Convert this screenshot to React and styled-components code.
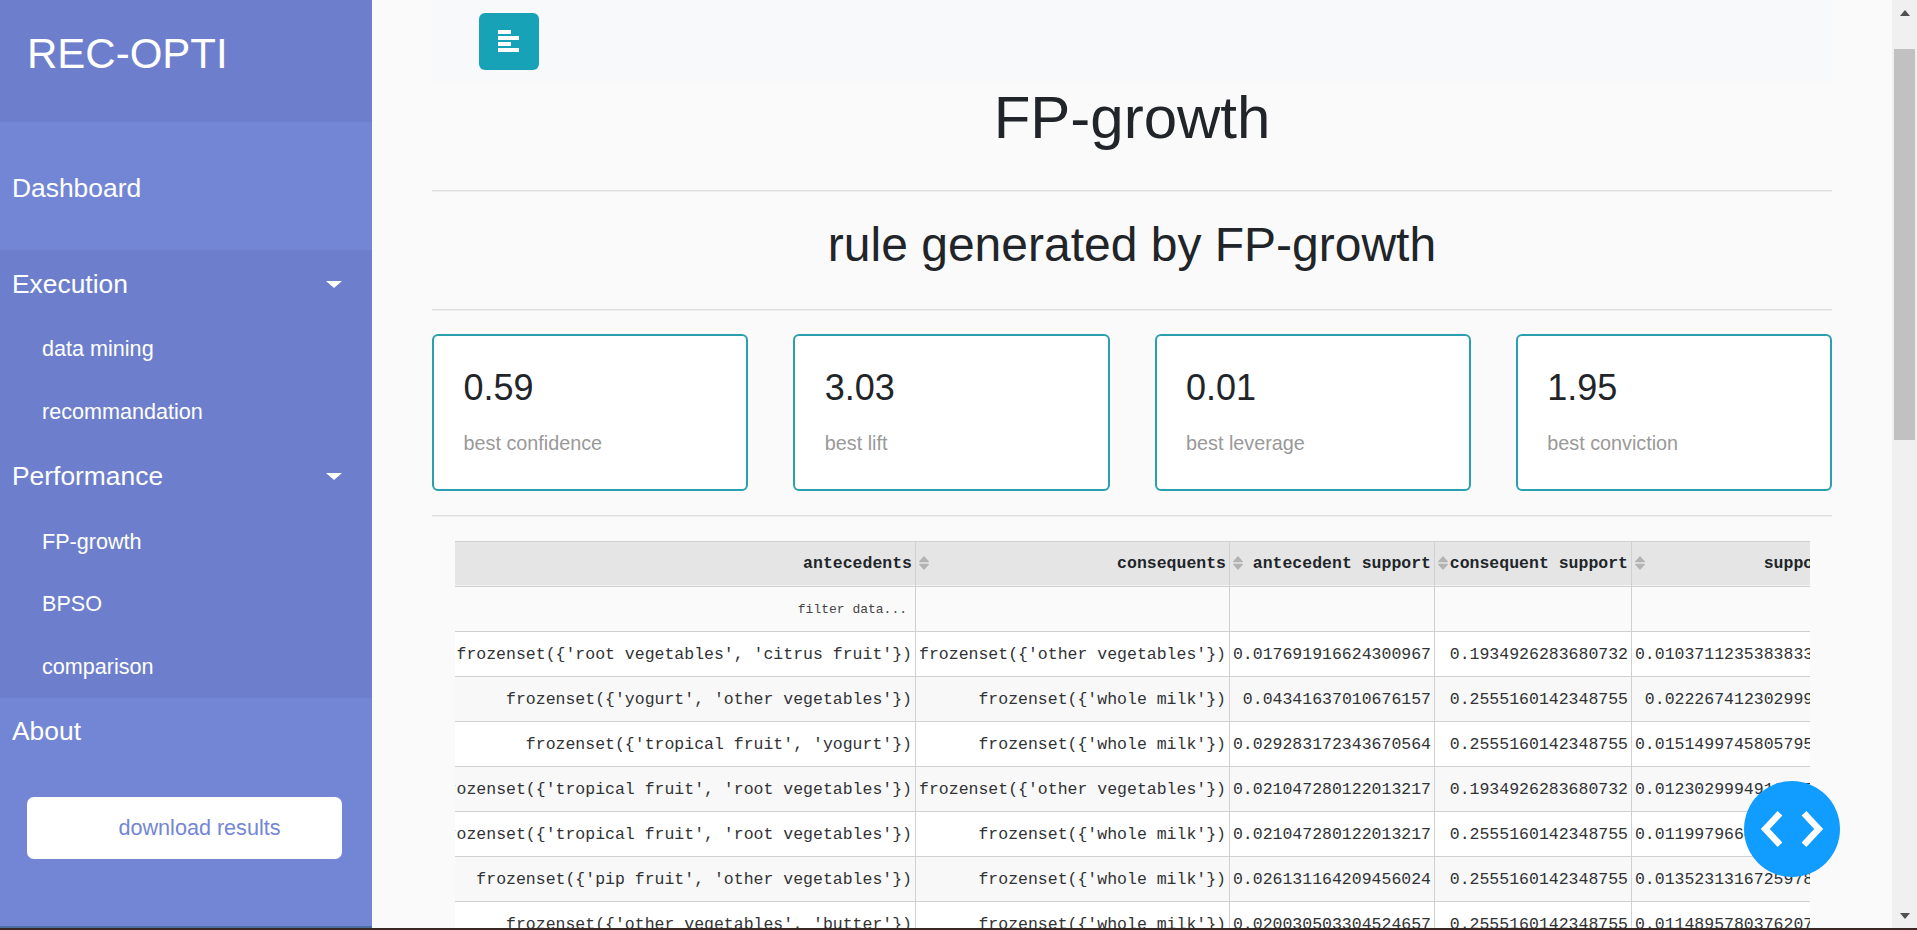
import React from "react";
import styled, { createGlobalStyle } from "styled-components";

const Global = createGlobalStyle`
  * { box-sizing: border-box; }
  html, body, #root { height: 100%; }
  body {
    margin: 0;
    overflow: hidden;
    background: #fafafa;
    color: #212529;
    font-family: "Liberation Sans", Arial, sans-serif;
  }
`;

const Screen = styled.div`
  display: flex;
  flex-direction: column;
  width: 1917px;
  height: 930px;
  overflow: hidden;
`;
const Page = styled.div`
  display: flex;
  height: 928px;
  overflow: hidden;
`;
const BottomEdge = styled.div`
  height: 2px;
  background: #3b2823;
`;

const Sidebar = styled.nav`
  display: flex;
  flex-direction: column;
  flex: 0 0 372px;
  background: #7386d5;
  color: #fff;
  border-bottom: 2px solid #4a6fa0;
`;
const Brand = styled.div`
  height: 122px;
  padding: 30px 27px 0 27px;
  background: #6d7fcc;
  font-size: 42px;
  line-height: 48px;
`;
const NavGroup = styled.div`
  background: #6d7fcc;
`;
const NavItem = styled.a`
  display: flex;
  align-items: center;
  justify-content: space-between;
  height: ${(p) => (p.$spacious ? 128 : 68)}px;
  padding: ${(p) => (p.$spacious ? 5 : 0)}px 30px 0 12px;
  font-size: 26.4px;
`;
const SubItem = styled.a`
  display: flex;
  align-items: center;
  height: 62.4px;
  padding-left: 42px;
  font-size: 21.6px;
`;
const Caret = styled.span`
  border: 8px solid transparent;
  border-top: 7.5px solid #fff;
  border-bottom: 0;
`;
const Download = styled.button`
  height: 62px;
  margin: 31px 30px 0 27px;
  padding: 0 0 0 30px;
  border: 0;
  border-radius: 7px;
  background: #fff;
  color: #7386d5;
  font: 21.6px "Liberation Sans", Arial, sans-serif;
`;

const Main = styled.main`
  flex: 1;
  padding: 0 60px;
  overflow: hidden;
`;
const Navbar = styled.div`
  display: flex;
  height: 82px;
  padding: 13px 47px;
  background: #f8f9fb;
`;
const Toggle = styled.button`
  display: flex;
  align-items: center;
  justify-content: center;
  width: 60px;
  height: 57px;
  padding: 0 1px 1px 0;
  border: 0;
  border-radius: 6px;
  background: #17a2b8;
`;
const Title = styled.h1`
  margin: 0;
  height: 108px;
  padding-top: 1px;
  font-size: 60px;
  font-weight: 400;
  line-height: 70px;
  text-align: center;
`;
const Subtitle = styled.h2`
  margin: 0;
  height: 117px;
  padding-top: 24px;
  font-size: 48px;
  font-weight: 400;
  line-height: 57px;
  text-align: center;
`;
const Rule = styled.hr`
  height: 2px;
  margin: 0;
  border: 0;
  border-top: 1px solid #dedede;
  background: #efefef;
`;
const Cards = styled.section`
  display: grid;
  grid-template-columns: repeat(4, 1fr);
  column-gap: 45px;
  padding: 23px 0 24px;
`;
const Card = styled.article`
  height: 157px;
  padding: 30px 29.5px;
  border: 2px solid #2aa0ae;
  border-radius: 6px;
  background: #fff;
`;
const Value = styled.div`
  font-size: 36px;
  line-height: 43px;
`;
const Label = styled.div`
  margin-top: 19px;
  color: #999;
  font-size: 19.8px;
  line-height: 30px;
`;

const TableFrame = styled.div`
  width: 1355px;
  margin: 24px 0 0 23px;
  overflow: hidden;
`;
const Table = styled.div`
  display: grid;
  width: max-content;
  grid-template-columns: 461px 314px 205px 197px 205px;
  border-top: 1px solid #d0d0d0;
  font-family: "Liberation Mono", monospace;
  font-size: 16.5px;
`;
const Cell = styled.div`
  display: flex;
  align-items: center;
  justify-content: flex-end;
  height: 45px;
  min-width: 0;
  padding: 0 3px;
  border-right: 1px solid #d0d0d0;
  border-bottom: 1px solid #d0d0d0;
  background: ${(p) => (p.$alt ? "#f8f8f8" : "#fff")};
  color: #303234;
  white-space: pre;
`;
const HeadCell = styled(Cell)`
  justify-content: space-between;
  padding-bottom: 1px;
  background: #e5e5e5;
  box-shadow: inset 0 -1px #f4f4f4;
  color: #212529;
  font-weight: 700;
`;
const FilterCell = styled(Cell)`
  padding-right: 8px;
  background: #fafafa;
  color: #444;
  font-size: 13px;
`;
const SortMark = styled.svg`
  flex: none;
  margin-bottom: 2px;
`;

const Scrollbar = styled.div`
  display: flex;
  flex: 0 0 25px;
  flex-direction: column;
  align-items: center;
  justify-content: space-between;
  padding: 10px 0 9px;
  background: #f0f0f0;
`;
const Thumb = styled.div`
  width: 21px;
  height: 391px;
  margin: 33px 0 auto;
  background: #c1c1c1;
`;
const Arrow = styled.span`
  border: 5.5px solid transparent;
  border-top: ${(p) => (p.$up ? "0" : "6px solid #505050")};
  border-bottom: ${(p) => (p.$up ? "6px solid #505050" : "0")};
`;
const DebugButton = styled.button`
  position: absolute;
  left: 1744px;
  top: 781px;
  display: flex;
  align-items: center;
  justify-content: center;
  width: 96px;
  height: 96px;
  padding: 0 1px 0 0;
  border: 0;
  border-radius: 50%;
  background: #119dff;
`;

const SortIcon = () => (
  <SortMark width="10" height="14" viewBox="0 0 10 14" fill="#b3b3b3">
    <path d="M5 0 10 5.500Q10 6.300 9 6.300H1Q0 6.300 0 5.500ZM5 14 0 8.500Q0 7.700 1 7.700H9Q10 7.700 10 8.500Z" />
  </SortMark>
);

const stats = [
  ["0.59", "best confidence"],
  ["3.03", "best lift"],
  ["0.01", "best leverage"],
  ["1.95", "best conviction"],
];
const columns = ["antecedents", "consequents", "antecedent support", "consequent support", "support"];
const milk = "frozenset({'whole milk'})";
const veg = "frozenset({'other vegetables'})";
const rows = [
  ["frozenset({'root vegetables', 'citrus fruit'})", veg, "0.017691916624300967", "0.1934926283680732", "0.010371123538383325"],
  ["frozenset({'yogurt', 'other vegetables'})", milk, "0.04341637010676157", "0.2555160142348755", "0.02226741230299949"],
  ["frozenset({'tropical fruit', 'yogurt'})", milk, "0.029283172343670564", "0.2555160142348755", "0.015149974580579562"],
  ["frozenset({'tropical fruit', 'root vegetables'})", veg, "0.021047280122013217", "0.1934926283680732", "0.012302999491611592"],
  ["frozenset({'tropical fruit', 'root vegetables'})", milk, "0.021047280122013217", "0.2555160142348755", "0.011997966446365024"],
  ["frozenset({'pip fruit', 'other vegetables'})", milk, "0.026131164209456024", "0.2555160142348755", "0.013523131672597865"],
  ["frozenset({'other vegetables', 'butter'})", milk, "0.020030503304524657", "0.2555160142348755", "0.011489578037620742"],
];

export default function App() {
  return (
    <Screen>
      <Global />
      <Page>
        <Sidebar>
          <Brand>REC-OPTI</Brand>
          <NavItem $spacious>Dashboard</NavItem>
          <NavGroup>
            <NavItem>Execution<Caret /></NavItem>
            <SubItem>data mining</SubItem>
            <SubItem>recommandation</SubItem>
            <NavItem>Performance<Caret /></NavItem>
            <SubItem>FP-growth</SubItem>
            <SubItem>BPSO</SubItem>
            <SubItem>comparison</SubItem>
          </NavGroup>
          <NavItem>About</NavItem>
          <Download>download results</Download>
        </Sidebar>
        <Main>
          <Navbar>
            <Toggle>
              <svg width="21" height="22" viewBox="0 0 21 22" fill="#fff">
                <path d="M0 0h13v4H0zM0 6h21v4H0zM0 12h13v4H0zM0 18h21v4H0z" />
              </svg>
            </Toggle>
          </Navbar>
          <Title>FP-growth</Title>
          <Rule />
          <Subtitle>rule generated by FP-growth</Subtitle>
          <Rule />
          <Cards>
            {stats.map(([value, label]) => (
              <Card key={label}>
                <Value>{value}</Value>
                <Label>{label}</Label>
              </Card>
            ))}
          </Cards>
          <Rule />
          <TableFrame>
            <Table>
              {columns.map((name, i) => (
                <HeadCell key={name}>
                  {i ? <SortIcon /> : <span />}
                  <span>{name}</span>
                </HeadCell>
              ))}
              {columns.map((name, i) => (
                <FilterCell key={name}>{i ? "" : "filter data..."}</FilterCell>
              ))}
              {rows.map((row, r) =>
                row.map((text, c) => (
                  <Cell key={`${r}-${c}`} $alt={r % 2 === 1}>{text}</Cell>
                ))
              )}
            </Table>
          </TableFrame>
        </Main>
        <Scrollbar>
          <Arrow $up />
          <Thumb />
          <Arrow />
        </Scrollbar>
      </Page>
      <BottomEdge />
      <DebugButton>
        <svg width="64" height="38" viewBox="0 0 64 38" fill="none" stroke="#fff" strokeWidth="6.5">
          <path d="M20 3.300 5.300 19 20 34.700M44 3.300 58.700 19 44 34.700" />
        </svg>
      </DebugButton>
    </Screen>
  );
}
